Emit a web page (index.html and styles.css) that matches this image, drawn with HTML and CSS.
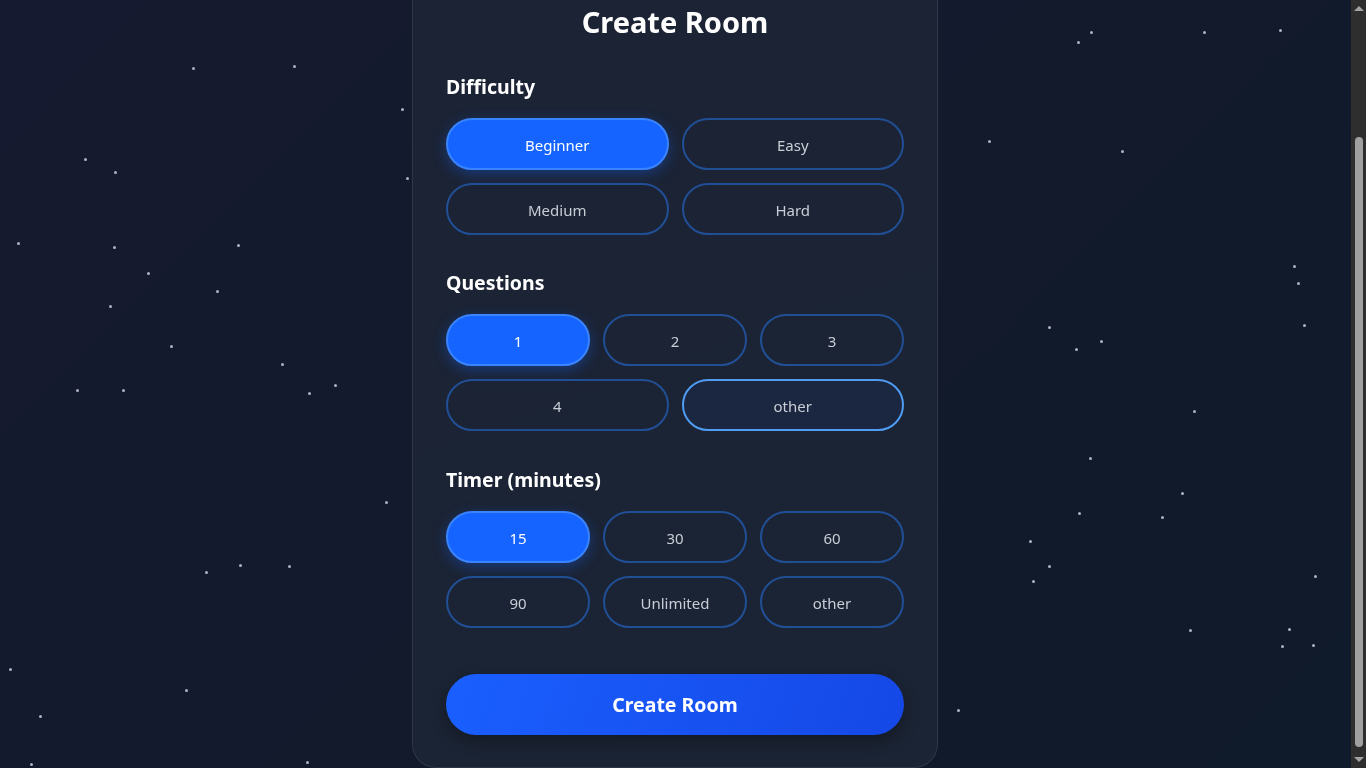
FILE: index.html
```html
<!DOCTYPE html>
<html lang="en">
<head>
<meta charset="utf-8">
<title>Create Room</title>
<link rel="stylesheet" href="styles.css">
</head>
<body>
<div class="stars" aria-hidden="true">
  <span class="star" style="left:193px;top:68px"></span>
  <span class="star" style="left:294px;top:66px"></span>
  <span class="star" style="left:402px;top:109px"></span>
  <span class="star" style="left:85px;top:159px"></span>
  <span class="star" style="left:115px;top:172px"></span>
  <span class="star" style="left:407px;top:178px"></span>
  <span class="star" style="left:18px;top:243px"></span>
  <span class="star" style="left:114px;top:247px"></span>
  <span class="star" style="left:238px;top:245px"></span>
  <span class="star" style="left:148px;top:273px"></span>
  <span class="star" style="left:217px;top:291px"></span>
  <span class="star" style="left:110px;top:306px"></span>
  <span class="star" style="left:171px;top:346px"></span>
  <span class="star" style="left:282px;top:364px"></span>
  <span class="star" style="left:77px;top:390px"></span>
  <span class="star" style="left:123px;top:390px"></span>
  <span class="star" style="left:335px;top:385px"></span>
  <span class="star" style="left:309px;top:393px"></span>
  <span class="star" style="left:386px;top:502px"></span>
  <span class="star" style="left:206px;top:572px"></span>
  <span class="star" style="left:240px;top:565px"></span>
  <span class="star" style="left:289px;top:566px"></span>
  <span class="star" style="left:10px;top:669px"></span>
  <span class="star" style="left:186px;top:690px"></span>
  <span class="star" style="left:40px;top:716px"></span>
  <span class="star" style="left:31px;top:764px"></span>
  <span class="star" style="left:307px;top:762px"></span>
  <span class="star" style="left:958px;top:710px"></span>
  <span class="star" style="left:1078px;top:42px"></span>
  <span class="star" style="left:1091px;top:32px"></span>
  <span class="star" style="left:1204px;top:32px"></span>
  <span class="star" style="left:1280px;top:30px"></span>
  <span class="star" style="left:989px;top:141px"></span>
  <span class="star" style="left:1122px;top:151px"></span>
  <span class="star" style="left:1294px;top:266px"></span>
  <span class="star" style="left:1298px;top:283px"></span>
  <span class="star" style="left:1049px;top:327px"></span>
  <span class="star" style="left:1076px;top:349px"></span>
  <span class="star" style="left:1101px;top:341px"></span>
  <span class="star" style="left:1304px;top:325px"></span>
  <span class="star" style="left:1194px;top:411px"></span>
  <span class="star" style="left:1090px;top:458px"></span>
  <span class="star" style="left:1182px;top:493px"></span>
  <span class="star" style="left:1079px;top:513px"></span>
  <span class="star" style="left:1162px;top:517px"></span>
  <span class="star" style="left:1030px;top:541px"></span>
  <span class="star" style="left:1049px;top:566px"></span>
  <span class="star" style="left:1033px;top:581px"></span>
  <span class="star" style="left:1315px;top:576px"></span>
  <span class="star" style="left:1190px;top:630px"></span>
  <span class="star" style="left:1289px;top:629px"></span>
  <span class="star" style="left:1282px;top:646px"></span>
  <span class="star" style="left:1313px;top:645px"></span>
</div>

<main class="page">
  <section class="card">
    <h1 class="title">Create Room</h1>

    <div class="group">
      <h2 class="label">Difficulty</h2>
      <div class="grid grid-two">
        <button class="opt is-active">Beginner</button>
        <button class="opt">Easy</button>
        <button class="opt">Medium</button>
        <button class="opt">Hard</button>
      </div>
    </div>

    <div class="group">
      <h2 class="label">Questions</h2>
      <div class="grid grid-six">
        <button class="opt span-2 is-active">1</button>
        <button class="opt span-2">2</button>
        <button class="opt span-2">3</button>
        <button class="opt span-3">4</button>
        <button class="opt span-3 is-focus">other</button>
      </div>
    </div>

    <div class="group group-timer">
      <h2 class="label">Timer (minutes)</h2>
      <div class="grid grid-three">
        <button class="opt is-active">15</button>
        <button class="opt">30</button>
        <button class="opt">60</button>
        <button class="opt">90</button>
        <button class="opt">Unlimited</button>
        <button class="opt">other</button>
      </div>
    </div>

    <button class="create">Create Room</button>
  </section>
</main>

<div class="scrollbar" aria-hidden="true">
  <span class="sb-arrow sb-up"></span>
  <div class="sb-track"><span class="sb-thumb"></span></div>
  <span class="sb-arrow sb-down"></span>
</div>

<script src="script.js"></script>
</body>
</html>
```

FILE: styles.css
```css
* { box-sizing: border-box; }

html {
  color-scheme: dark;
  background: #12182a;
}

body {
  margin: 0;
  min-height: 100vh;
  font-family: "Segoe UI", "Noto Sans", "Open Sans", sans-serif;
  color: #ffffff;
  background: linear-gradient(135deg, #161a30 0%, #121a2c 55%, #0f1a2a 100%);
  background-attachment: fixed;
}

.stars {
  position: fixed;
  inset: 0;
  pointer-events: none;
  z-index: 0;
}

.star {
  position: absolute;
  width: 3px;
  height: 3px;
  margin: -1px 0 0 -1px;
  border-radius: 50%;
  background: #aeb3c3;
}

.page {
  position: relative;
  z-index: 1;
  display: flex;
  justify-content: center;
  padding: 121px 16px 0 0;
}

.card {
  width: 526px;
  padding: 32px 33px 32px;
  background: linear-gradient(160deg, #1b2335 0%, #1b2434 100%);
  border: 1px solid rgba(255, 255, 255, 0.09);
  border-radius: 24px;
  display: flex;
  flex-direction: column;
}

.title {
  margin: 0 0 34px;
  font-size: 29px;
  line-height: 38px;
  font-weight: 700;
  text-align: center;
}

.group + .group { margin-top: 36px; }
.group + .group-timer { margin-top: 37px; }

.label {
  margin: 0 0 19px;
  font-size: 19.5px;
  line-height: 24px;
  font-weight: 700;
}

.grid {
  display: grid;
  gap: 13px;
}
.grid-two { grid-template-columns: repeat(2, 1fr); }
.grid-three { grid-template-columns: repeat(3, 1fr); }
.grid-six { grid-template-columns: repeat(6, 1fr); }
.span-2 { grid-column: span 2; }
.span-3 { grid-column: span 3; }

.opt {
  height: 52px;
  padding: 1px 0 0;
  border-radius: 26px;
  border: 2px solid #214f95;
  background: transparent;
  color: #c9cdd6;
  font-family: inherit;
  font-size: 15px;
}

.opt.is-active {
  background: #1664ff;
  border-color: #3a84ff;
  color: #ffffff;
  box-shadow: 0 4px 14px rgba(22, 100, 255, 0.35);
}

.opt.is-focus {
  background: #1b2640;
  border-color: #4f9cf2;
}

.create {
  margin-top: 46px;
  height: 61px;
  padding: 0;
  border: none;
  border-radius: 31px;
  background: linear-gradient(110deg, #1a5fff 0%, #1548e6 100%);
  color: #ffffff;
  font-family: inherit;
  font-size: 19.5px;
  font-weight: 700;
  box-shadow: 0 6px 16px rgba(0, 0, 0, 0.3);
}

/* browser scrollbar as it appears in the reference */
.scrollbar {
  position: fixed;
  top: 0;
  right: 0;
  width: 15px;
  height: 100vh;
  background: #2e2e2e;
  z-index: 5;
  display: flex;
  flex-direction: column;
  align-items: center;
}

.sb-arrow {
  flex: 0 0 17px;
  display: flex;
  align-items: center;
  justify-content: center;
}
.sb-arrow::before {
  content: "";
  width: 0;
  height: 0;
  border-left: 5px solid transparent;
  border-right: 5px solid transparent;
}
.sb-up::before { border-bottom: 5px solid #a3a3a3; }
.sb-down::before { border-top: 5px solid #a3a3a3; }

.sb-track {
  flex: 1;
  width: 100%;
  display: flex;
  flex-direction: column;
  justify-content: flex-end;
  align-items: center;
  padding-bottom: 4px;
}

.sb-thumb {
  width: 8px;
  height: 610px;
  border-radius: 4px;
  background: #a0a0a0;
}
```

FILE: script.js
```js
window.scrollTo(0, document.documentElement.scrollHeight);
window.addEventListener('load', function () {
  window.scrollTo(0, document.documentElement.scrollHeight);
});
```
